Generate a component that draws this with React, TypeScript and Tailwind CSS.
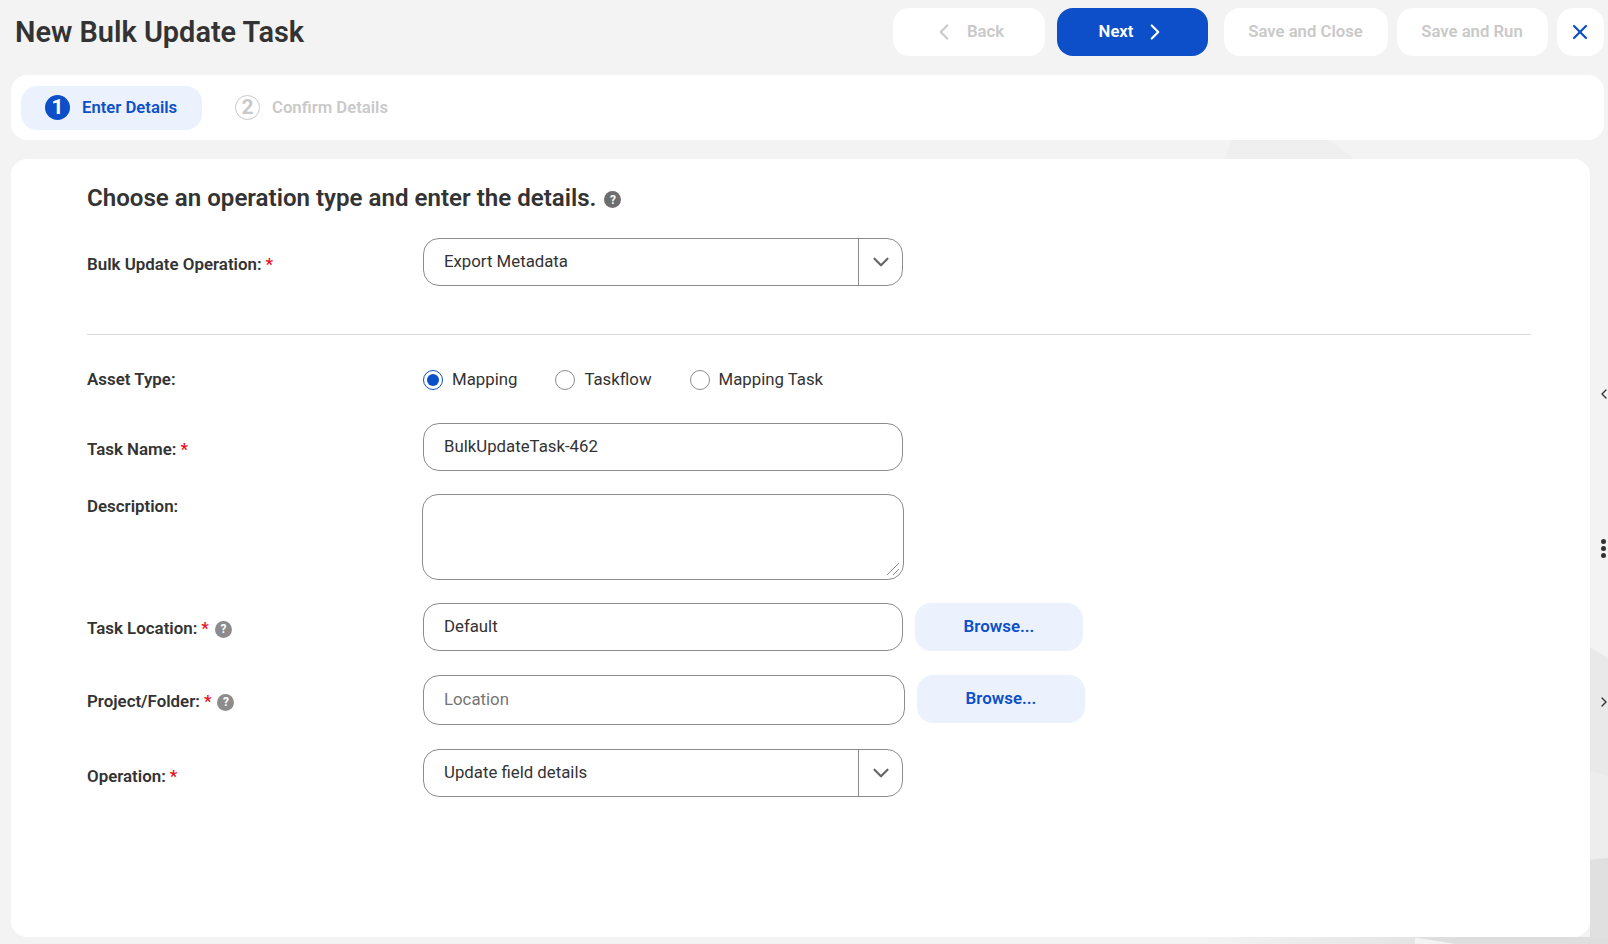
import { ChevronDown, ChevronLeft, ChevronRight, X } from "lucide-react";

const FONT = "font-['Roboto','Liberation_Sans',sans-serif]";
const fieldCls = "h-12 w-[480px] rounded-2xl border border-[#8c8c8c] bg-white px-5 text-[16.8px] text-[#333] flex items-center";
const labelCls = "w-[336px] shrink-0 flex items-center gap-[6px] text-[16.9px] font-semibold text-[#333]";
const browseCls = "ml-3 flex h-12 w-[168px] items-center justify-center rounded-2xl bg-[#ebf2fd] text-[16.9px] font-semibold text-[#0c4fc8]";

function Help({ className }: { className: string }) {
  return (
    <span className={`inline-flex items-center justify-center rounded-full text-[12px] font-bold leading-none text-white ${className}`}>?</span>
  );
}

function Label({ text, required, help, className = "" }: { text: string; required?: boolean; help?: boolean; className?: string }) {
  return (
    <div className={`${labelCls} ${className}`}>
      <span>
        {text}
        {required && <span className="ml-[4px] text-[#e8101a]">*</span>}
      </span>
      {help && <Help className="h-[17px] w-[17px] bg-[#8c8c8c]" />}
    </div>
  );
}

function Select({ value }: { value: string }) {
  return (
    <div className="flex h-12 w-[480px] items-stretch rounded-2xl border border-[#8c8c8c] bg-white text-[16.8px] text-[#333]">
      <div className="flex flex-1 items-center pl-5">{value}</div>
      <div className="flex w-[44px] items-center justify-center border-l border-[#8c8c8c]">
        <ChevronDown size={26} strokeWidth={2} className="text-[#666]" />
      </div>
    </div>
  );
}

function Radio({ label, checked }: { label: string; checked?: boolean }) {
  return (
    <div className="flex items-center gap-[9px] text-[16.8px] text-[#333]">
      <span className={`flex h-5 w-5 items-center justify-center rounded-full border ${checked ? "border-[#0c4fc8]" : "border-[#8c8c8c]"}`}>
        {checked && <span className="h-3 w-3 rounded-full bg-[#0c4fc8]" />}
      </span>
      {label}
    </div>
  );
}

function TopButton({ children, className }: { children: React.ReactNode; className: string }) {
  return (
    <div className={`flex h-12 items-center justify-center rounded-2xl text-[16.7px] font-semibold ${className}`}>{children}</div>
  );
}

export default function App() {
  return (
    <div className={`${FONT} relative h-[944px] w-[1608px] overflow-hidden bg-[#f3f3f3]`}>
      {/* faint shapes behind the panels */}
      <svg className="absolute inset-0" width="1608" height="944" viewBox="0 0 1608 944">
        <defs>
          <linearGradient id="strip" x1="0" y1="0" x2="1" y2="0">
            <stop offset="0" stopColor="#f3f3f3" />
            <stop offset="1" stopColor="#e4e4e4" />
          </linearGradient>
        </defs>
        <polygon points="1232,140 1328,140 1355,159 1224,159" fill="#efefef" />
        <path d="M1590 647 C1596 651 1602 655 1608 657 L1608 944 L1590 944 Z" fill="#e9e9e9" />
        <path d="M1590 771 C1596 772 1602 774 1608 776 L1608 944 L1590 944 Z" fill="#ededed" />
        <path d="M1590 860 C1596 859 1602 858 1608 858 L1608 944 L1590 944 Z" fill="#e0e0e0" />
        <rect x="1200" y="937" width="215" height="7" fill="url(#strip)" />
        <polygon points="1412,937 1608,937 1608,944 1456,944" fill="#dedede" />
      </svg>

      <div className="relative flex h-full flex-col">
        <div className="flex h-[75px] shrink-0 items-start pt-2">
          <h1 className="ml-[15px] mt-[6px] text-[28.9px] font-semibold leading-[36px] text-[#333]">New Bulk Update Task</h1>
          <div className="ml-auto mr-[4.5px] flex">
            <TopButton className="w-[152px] gap-[10px] bg-white pr-[2px] text-[#c9c9c9]">
              <ChevronLeft size={26} strokeWidth={2} />
              Back
            </TopButton>
            <TopButton className="ml-3 w-[151px] gap-[9px] bg-[#0c4fc8] pl-[3px] text-white">
              Next
              <ChevronRight size={26} strokeWidth={2} />
            </TopButton>
            <TopButton className="ml-4 w-[164px] bg-white text-[#c9c9c9]">Save and Close</TopButton>
            <TopButton className="ml-[9px] w-[151px] bg-white text-[#c9c9c9]">Save and Run</TopButton>
            <TopButton className="ml-[9px] w-[47px] bg-white text-[#0c4fc8]">
              <X size={24} strokeWidth={2.2} />
            </TopButton>
          </div>
        </div>

        <div className="ml-[11px] mr-[4px] flex h-[65px] shrink-0 items-center gap-[33px] rounded-2xl bg-white pl-[10px]">
          <div className="flex h-11 w-[181px] items-center gap-3 rounded-2xl bg-[#ebf2fd] pl-6">
            <span className="flex h-[25px] w-[25px] items-center justify-center rounded-full bg-[#0c4fc8] text-[21px] font-bold text-white">1</span>
            <span className="text-[16.7px] font-semibold text-[#0c4fc8]">Enter Details</span>
          </div>
          <div className="flex items-center gap-3 text-[#c9c9c9]">
            <span className="flex h-[25px] w-[25px] items-center justify-center rounded-full border border-[#c9c9c9] text-[21px] font-bold">2</span>
            <span className="text-[16.7px] font-semibold">Confirm Details</span>
          </div>
        </div>

        <div className="ml-[11px] mt-[19px] h-[778px] w-[1579px] rounded-2xl bg-white pl-[76px]">
          <div className="flex h-[79px] items-center gap-2">
            <h2 className="text-[24.1px] font-semibold text-[#333]">Choose an operation type and enter the details.</h2>
            <Help className="mt-[2px] h-[17px] w-[17px] bg-[#6e6e6e]" />
          </div>

          <div className="flex">
            <Label text="Bulk Update Operation:" required className="pt-[6px]" />
            <Select value="Export Metadata" />
          </div>

          <div className="mt-[48px] w-[1444px] border-t border-[#d9d9d9]" />

          <div className="mt-[35px] flex h-5 items-center">
            <div className={labelCls}>Asset Type:</div>
            <div className="flex gap-[38px]">
              <Radio label="Mapping" checked />
              <Radio label="Taskflow" />
              <Radio label="Mapping Task" />
            </div>
          </div>

          <div className="mt-[33px] flex">
            <Label text="Task Name:" required className="pt-[6px]" />
            <div className={fieldCls}>BulkUpdateTask-462</div>
          </div>

          <div className="mt-[23px] flex">
            <div className={`${labelCls} h-[22px] items-start`}>Description:</div>
            <div className="relative -ml-px h-[86px] w-[482px] rounded-2xl border border-[#8c8c8c] bg-white">
              <svg className="absolute bottom-[3px] right-[3px]" width="14" height="14" viewBox="0 0 14 14">
                <path d="M13 1 L1 13 M13 7 L7 13" stroke="#8c8c8c" strokeWidth="1" fill="none" />
              </svg>
            </div>
          </div>

          <div className="mt-[23px] flex">
            <Label text="Task Location:" required help className="pt-1" />
            <div className={fieldCls}>Default</div>
            <div className={browseCls}>Browse...</div>
          </div>

          <div className="mt-6 flex">
            <Label text="Project/Folder:" required help className="pt-1" />
            <div className="flex h-[50px] w-[482px] items-center rounded-2xl border border-[#8c8c8c] bg-white px-5 text-[16.8px] text-[#757575]">Location</div>
            <div className={browseCls}>Browse...</div>
          </div>

          <div className="mt-6 flex">
            <Label text="Operation:" required className="pt-[7px]" />
            <Select value="Update field details" />
          </div>
        </div>
      </div>

      {/* side rail controls, clipped by the window edge */}
      <ChevronLeft size={16} strokeWidth={2} className="absolute left-[1596px] top-[386px] text-[#333]" />
      <div className="absolute left-[1601px] top-[539px] flex flex-col gap-[2px]">
        <span className="h-[5px] w-[5px] rounded-full bg-[#333]" />
        <span className="h-[5px] w-[5px] rounded-full bg-[#333]" />
        <span className="h-[5px] w-[5px] rounded-full bg-[#333]" />
      </div>
      <ChevronRight size={16} strokeWidth={2} className="absolute left-[1596px] top-[694px] text-[#333]" />
    </div>
  );
}
